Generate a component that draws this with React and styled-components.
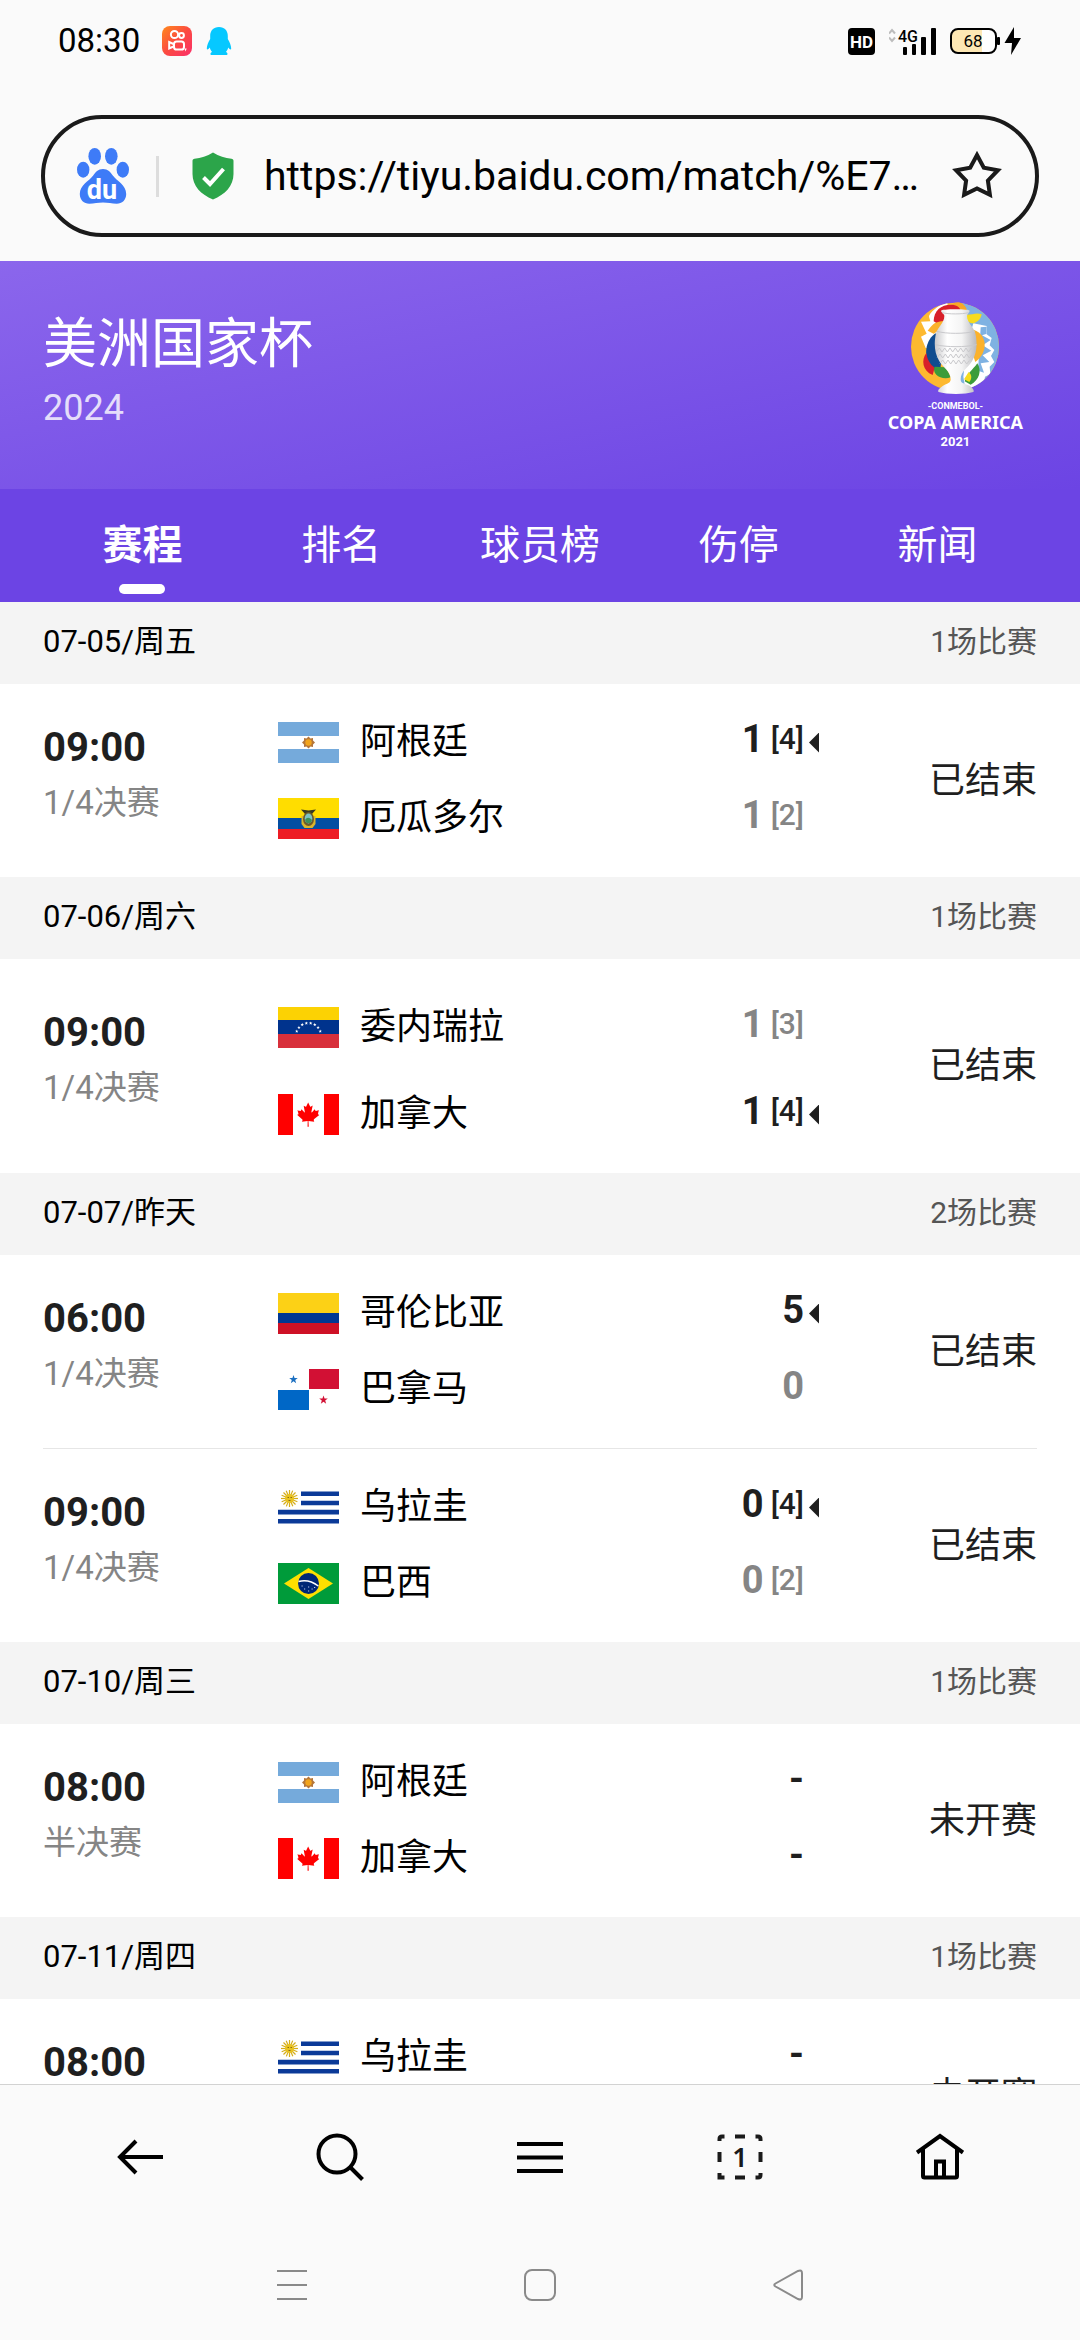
import React, { useState } from "react";
import styled, { createGlobalStyle } from "styled-components";

const GlobalStyle = createGlobalStyle`
  * {
    box-sizing: border-box;
  }

  body {
    margin: 0;
    background: #fafafa;
    color: #000000;
    font-family: "Roboto", "Noto Sans CJK SC", sans-serif;
  }

  button,
  input {
    padding: 0;
    border: none;
    background: none;
    color: inherit;
    font-family: inherit;
  }

  svg {
    display: block;
    flex-shrink: 0;
  }
`;

const Screen = styled.div`
  display: flex;
  flex-direction: column;
  height: 100vh;
  overflow: hidden;
`;

// status bar
const StatusBar = styled.div`
  display: flex;
  align-items: center;
  justify-content: space-between;
  height: 82px;
  padding: 0 58px;
  flex-shrink: 0;
`;

const StatusGroup = styled.div`
  display: flex;
  align-items: center;
`;

const Clock = styled.span`
  font-size: 33px;
  line-height: 40px;
  margin-right: 22px;
`;

const AppIcons = styled.div`
  display: flex;
  align-items: center;
  gap: 14px;
`;

// address bar
const AddressBar = styled.div`
  display: flex;
  align-items: center;
  height: 122px;
  margin: 33px 41px 24px;
  padding: 0 32px;
  border: 4px solid #1a1a1a;
  border-radius: 61px;
  flex-shrink: 0;
`;

const Separator = styled.div`
  width: 3px;
  height: 41px;
  margin: 0 33px 0 27px;
  background: #dddddd;
`;

const UrlInput = styled.input`
  flex: 1;
  min-width: 0;
  height: 60px;
  margin: 0 20px 0 30px;
  font-size: 41px;
  text-overflow: ellipsis;

  &:focus-visible {
    outline: unset;
  }
`;

const IconButton = styled.button`
  display: flex;
  align-items: center;
  justify-content: center;
  cursor: pointer;
`;

// competition header
const Banner = styled.header`
  display: flex;
  justify-content: space-between;
  height: 228px;
  padding: 41px 57px 0 43px;
  background: linear-gradient(to bottom right, #8b66ec 0%, #6c44e4 100%);
  color: #ffffff;
  flex-shrink: 0;
`;

const BannerTitle = styled.h1`
  margin: 0;
  font-weight: 400;
  font-size: 54px;
  line-height: 86px;
`;

const Season = styled.div`
  font-size: 36px;
  line-height: 40px;
  opacity: 0.8;
`;

const CupLogo = styled.div`
  display: flex;
  flex-direction: column;
  align-items: center;
  font-weight: 700;
  white-space: nowrap;
`;

const CupOrganiser = styled.span`
  margin-top: 6px;
  font-size: 9px;
  line-height: 12px;
`;

const CupName = styled.span`
  font-family: "Noto Sans", sans-serif;
  font-size: 18px;
  line-height: 20px;
`;

const CupYear = styled.span`
  font-size: 13px;
  line-height: 20px;
`;

const Tabs = styled.nav`
  display: flex;
  height: 113px;
  padding: 0 43px;
  background: #6c44e4;
  flex-shrink: 0;
`;

const Tab = styled.button`
  flex: 1;
  display: flex;
  flex-direction: column;
  align-items: center;
  padding-top: 27px;
  color: #ffffff;
  font-size: 40px;
  line-height: 60px;
  font-weight: ${(props) => (props.$active ? 700 : 400)};
  cursor: pointer;

  &::after {
    content: "";
    width: 46px;
    height: 10px;
    margin-top: 8px;
    border-radius: 5px;
    background: ${(props) => (props.$active ? "#ffffff" : "transparent")};
  }
`;

// schedule
const Schedule = styled.main`
  flex: 1;
  min-height: 0;
  overflow-y: auto;
  scrollbar-width: none;
  background: #ffffff;
`;

const DayHeader = styled.div`
  display: flex;
  align-items: center;
  justify-content: space-between;
  height: 82px;
  padding: 0 43px 2px;
  background: #f4f4f4;
  line-height: 40px;
`;

const DayTitle = styled.h2`
  margin: 0;
  font-size: 31px;
  font-weight: 400;
`;

const DayCount = styled.span`
  font-size: 30px;
  color: #555555;
`;

const MatchList = styled.ul`
  margin: 0;
  padding: 0 43px;
  list-style: none;
`;

const MatchRow = styled.li`
  display: grid;
  grid-template-columns: 235px 1fr 218px;
  align-items: center;
  padding: 38px 0;

  & + & {
    border-top: 1px solid #e6e6e6;
  }
`;

const KickOff = styled.div`
  font-weight: 700;
  font-size: 40px;
  line-height: 34px;
  color: #1f1f1f;
`;

const Stage = styled.div`
  margin-top: 10px;
  font-size: 33px;
  line-height: 56px;
  color: #858585;
`;

const Teams = styled.div`
  display: flex;
  flex-direction: column;
  gap: ${(props) => (props.$tall ? 36 : 35)}px;
`;

const TeamRow = styled.div`
  display: flex;
  align-items: center;
  height: ${(props) => (props.$tall ? 51 : 41)}px;
  padding-top: ${(props) => (props.$tall ? 10 : 0)}px;
`;

const TeamName = styled.span`
  margin-left: 21px;
  font-size: 36px;
  line-height: 41px;
`;

const Score = styled.span`
  display: flex;
  align-self: flex-start;
  gap: 7px;
  margin-left: auto;
  font-weight: 700;
  font-size: 38px;
  line-height: 34px;
  color: ${(props) => (props.$muted ? "#858585" : "#1f1f1f")};
`;

const Penalties = styled.span`
  font-weight: 500;
  font-size: 30px;
`;

const WinnerMark = styled.span`
  width: 10px;
  height: 20px;
  margin-left: 5px;
  background: ${(props) => (props.$winner ? "#1f1f1f" : "transparent")};
  clip-path: polygon(100% 0, 100% 100%, 0 50%);
`;

const MatchStatus = styled.div`
  text-align: right;
  font-size: 36px;
  line-height: 52px;
  color: #1f1f1f;
`;

// bottom bars
const Toolbar = styled.nav`
  display: grid;
  grid-template-columns: repeat(5, 1fr);
  height: 145px;
  padding: 0 40px;
  border-top: 1px solid #d2d2d2;
  background: #fafafa;
  flex-shrink: 0;
`;

const SystemNav = styled.nav`
  display: grid;
  grid-template-columns: repeat(3, 248px);
  justify-content: center;
  height: 111px;
  background: #fafafa;
  flex-shrink: 0;
`;

const KuaishouIcon = () => (
  <svg width="30" height="30" viewBox="0 0 30 30">
    <defs>
      <linearGradient id="ks" x1="0" y1="0" x2="1" y2="1">
        <stop offset="0" stopColor="#ff8a1c" />
        <stop offset="0.5" stopColor="#fb4a41" />
        <stop offset="1" stopColor="#fb2f6a" />
      </linearGradient>
    </defs>
    <rect width="30" height="30" rx="8" fill="url(#ks)" />
    <g fill="none" stroke="#ffffff" strokeWidth="2">
      <circle cx="12.500" cy="8.500" r="3.600" />
      <circle cx="19.500" cy="9.500" r="2.400" />
      <rect x="12" y="15.500" width="10" height="8" rx="2.600" />
      <path d="M11.500 18 7.200 16v6.500l4.300-2" />
    </g>
    <path d="M22.500 22.500h2.200l-1.200 3z" fill="#ffffff" />
  </svg>
);

const QQIcon = () => (
  <svg width="26" height="30" viewBox="0 0 26 30">
    <path
      d="M13 1c5.600 0 8.800 3.800 8.800 9v3c1.800 3 3.400 6.500 3.400 9.500 0 1.700-1.600 1-3-1-.5 2-1.200 3.300-2.300 4.500 2 .8 2.200 3 .4 3H5.700c-1.800 0-1.600-2.200.4-3-1.100-1.200-1.800-2.500-2.300-4.500-1.400 2-3 2.700-3 1 0-3 1.600-6.500 3.400-9.500v-3c0-5.200 3.200-9 8.800-9z"
      fill="#06c8ff"
    />
  </svg>
);

const HdIcon = () => (
  <svg width="27" height="27" viewBox="0 0 27 27">
    <rect width="27" height="27" rx="4" fill="#000000" />
    <text
      x="13.500"
      y="20"
      textAnchor="middle"
      fontFamily="Roboto"
      fontWeight="700"
      fontSize="17"
      fill="#ffffff"
    >
      HD
    </text>
  </svg>
);

const SignalIcon = () => (
  <svg width="47" height="27" viewBox="1 0 47 27">
    <path
      d="M1 5.500 4 2l3 3.500M1 9.500 4 13l3-3.500"
      fill="none"
      stroke="#bcbcbc"
      strokeWidth="2"
    />
    <text x="10" y="13.500" fontFamily="Roboto" fontWeight="500" fontSize="16">
      4G
    </text>
    <rect x="15" y="19" width="4" height="8" rx="1" />
    <rect x="24" y="16" width="4" height="11" rx="1" />
    <rect x="33" y="9" width="5" height="18" rx="1" />
    <rect x="43" y="0" width="5" height="27" rx="1" />
  </svg>
);

const BatteryIcon = () => (
  <svg width="72" height="28" viewBox="0 0 72 28">
    <rect x="1" y="2" width="45" height="24" rx="7" fill="#ffffff" />
    <path d="M8 2h24v24H8a7 7 0 0 1-7-7V9a7 7 0 0 1 7-7z" fill="#fde7b3" />
    <rect
      x="1"
      y="2"
      width="45"
      height="24"
      rx="7"
      fill="none"
      stroke="#000000"
      strokeWidth="2"
    />
    <rect x="47" y="10" width="3" height="8" rx="1" />
    <text x="23" y="20" textAnchor="middle" fontFamily="Roboto" fontSize="17">
      68
    </text>
    <path d="M64 0 54.500 16H62l-1 12L71 11h-7z" />
  </svg>
);

const BaiduIcon = () => (
  <svg width="52" height="58" viewBox="77 147 52 58">
    <g fill="#3e7bf7">
      <ellipse cx="94.700" cy="156.300" rx="6.300" ry="8.400" />
      <ellipse cx="111.300" cy="156.300" rx="6.300" ry="8.400" />
      <ellipse cx="83.200" cy="169.700" rx="6.200" ry="8" />
      <ellipse cx="122.800" cy="169.700" rx="6.200" ry="8" />
      <path d="M103 169c5 0 7.500 3 10 6.800 3.500 5 13.200 9.200 13.200 18.200 0 6-4.200 9.800-9.500 9.800-5 0-8.500-1.200-13.700-1.200s-8.700 1.200-13.700 1.200c-5.300 0-9.500-3.800-9.500-9.800 0-9 9.700-13.200 13.200-18.200 2.500-3.800 5-6.800 10-6.800z" />
    </g>
    <text
      x="102"
      y="198.500"
      textAnchor="middle"
      fontFamily="Roboto"
      fontWeight="700"
      fontSize="27"
      fill="#ffffff"
    >
      du
    </text>
  </svg>
);

const ShieldIcon = () => (
  <svg width="42" height="48" viewBox="0 0 42 48">
    <path
      d="M21 .5c6 3.500 12 5.800 18.500 6.200 1.200.1 2 .9 2 2.300v13c0 12-8.500 20.500-20.500 25.500C9 42.500.5 34 .5 22V9c0-1.400.8-2.200 2-2.300C9 6.300 15 4 21 .5z"
      fill="#2ca54a"
    />
    <path
      d="m11.500 25.500 6.500 6.500 13.500-15"
      fill="none"
      stroke="#ffffff"
      strokeWidth="4"
    />
  </svg>
);

const StarIcon = () => (
  <svg width="52" height="52" viewBox="0 0 52 52">
    <path
      d="M26 5 32.800 17.700 46.900 20.200 36.900 30.600 38.900 44.800 26 38.500 13.100 44.800 15.100 30.600 5.100 20.200 19.200 17.700z"
      fill="none"
      stroke="#1a1a1a"
      strokeWidth="4"
    />
  </svg>
);

const CupIcon = () => (
  <svg width="88" height="92" viewBox="153 66 264 276">
    <defs>
      <linearGradient id="cup" x1="0" x2="1">
        <stop offset="0" stopColor="#c9c9cb" />
        <stop offset="0.3" stopColor="#ffffff" />
        <stop offset="0.65" stopColor="#f4f4f4" />
        <stop offset="1" stopColor="#b9b9bd" />
      </linearGradient>
      <clipPath id="disc">
        <circle cx="285" cy="200" r="132" />
      </clipPath>
    </defs>
    <g clipPath="url(#disc)">
      <rect x="153" y="66" width="264" height="276" fill="#fdb930" />
      <path d="M292 60h130v290h-90l-40-60z" fill="#7fb2e2" />
      <path
        d="M262 66c-30 10-55 35-55 44l4 14-28 1 17 36-17 9 14 34 50 6 20-80z"
        fill="#ffffff"
      />
      <path
        d="m340 130 40 8-1 24 16 12-6 22 14 14-10 18 10 18-14 14 2 22-16 8-4 22-20 18-31 20-10-60 10-90z"
        fill="#ffffff"
      />
      <path
        d="m362 142 18-2-2 22-12 4 26 14-24 16 26 16-26 14 20 20-26 4 10 28-18-6z"
        fill="#7fb2e2"
      />
    </g>
    <path d="M278 74c8-12 34-10 42 14l2 12h-26z" fill="#f9a825" />
    <path d="M221 124c0-32 22-50 52-50 16 0 28 8 30 20l-56 46z" fill="#d8202a" />
    <path d="M203 152c12-14 18-27 46-29l2 26c-18 0-24 10-30 12z" fill="#fbb22c" />
    <path d="M318 104c16 2 30-8 47-1-2 12-10 22-22 26-10 2-18-2-22-8z" fill="#f7dc1e" />
    <path d="M228 160c-24 12-38 52-24 86 8 18 20 26 36 28l8-60z" fill="#0f4c8f" />
    <path d="M199 219c-16 20-12 54 19 66l6-22c-14-10-22-24-25-44z" fill="#d8202a" />
    <path d="M224 260c-10 22 20 42 48 32l-14-30z" fill="#3c9c3a" />
    <path d="M342 150c40 14 44 66 4 96l-10-30z" fill="#fbb22c" />
    <path d="M352 250c14 22 6 50-20 64l-18-10c6-22 24-34 38-54z" fill="#3c9c3a" />
    <path d="M326 276c10 8 10 20 2 30l-16-8z" fill="#f7dc1e" />
    <path
      d="M243 92c0-6 86-6 86 0s-8 9-8 16c0 20 20 32 25 52 6 26 6 58-10 84-12 20-34 30-34 54 0 14 12 12 28 20 8 6 14 14 10 18-24 8-80 8-104 0-6-4 4-12 12-18 14-8 24-8 24-20 0-24-22-34-34-54-16-26-16-58-10-84 6-20 25-32 25-52 0-7-10-10-10-16z"
      fill="url(#cup)"
    />
    <g fill="none" stroke="#c9c9cc" strokeWidth="3">
      <path d="M246 98c20 5 60 5 80 0M230 154c30 8 84 8 114 0M226 194c34 8 90 8 124 0" />
      <path d="m230 214 8-10 8 12 8-12 8 12 8-12 8 12 8-12 8 12 8-12 8 12 8-12 8 12 8-12 6 10M232 232l8-10 8 12 8-12 8 12 8-12 8 12 8-12 8 12 8-12 8 12 8-12 8 12 8-10M240 250l8-10 8 12 8-12 8 12 8-12 8 12 8-12 8 12 8-12 8 12 8-10" />
    </g>
  </svg>
);

const starPoints = (cx, cy, r) =>
  Array.from({ length: 10 }, (_, i) => {
    const radius = i % 2 ? r * 0.4 : r;
    const angle = (Math.PI / 5) * i;
    return `${cx + radius * Math.sin(angle)},${cy - radius * Math.cos(angle)}`;
  }).join(" ");

const flags = {
  argentina: (
    <>
      <rect width="61" height="41" fill="#ffffff" />
      <rect width="61" height="14" fill="#75aadb" />
      <rect y="27" width="61" height="14" fill="#75aadb" />
      <polygon
        points="30.500,14.500 32.500,16.500 35,16 35,18.500 37,20.500 35,22.500 35,25 32.500,24.500 30.500,26.500 28.500,24.500 26,25 26,22.500 24,20.500 26,18.500 26,16 28.500,16.500"
        fill="#b5763a"
      />
      <circle cx="30.500" cy="20.500" r="3.200" fill="#f2a51d" />
    </>
  ),
  ecuador: (
    <>
      <rect width="61" height="21" fill="#ffdd00" />
      <rect y="20" width="61" height="11" fill="#034ea2" />
      <rect y="31" width="61" height="10" fill="#ed1c24" />
      <path d="M23.500 18h14v8l-3 4h-8l-3-4z" fill="#d9b52c" />
      <path
        d="M23 11.500c3 0 5 1 7.500 1s4.500-1 7.500-1l-4 4.500h-7z"
        fill="#3a3a20"
      />
      <ellipse cx="30.500" cy="21" rx="5.500" ry="7" fill="#6b5b2c" />
      <ellipse cx="30.500" cy="20.500" rx="3.800" ry="5" fill="#7cc2c4" />
      <path d="M27 22c2-3 4-3 7 0l-1.500 3h-4z" fill="#3f8f55" />
    </>
  ),
  venezuela: (
    <>
      <rect width="61" height="14" fill="#fcd203" />
      <rect y="13" width="61" height="14" fill="#00338d" />
      <rect y="27" width="61" height="14" fill="#d8303b" />
      {[-70, -50, -30, -10, 10, 30, 50, 70].map((deg) => {
        const a = (deg * Math.PI) / 180;
        return (
          <polygon
            key={deg}
            points={starPoints(
              30.5 + 12.5 * Math.sin(a),
              28.5 - 12.5 * Math.cos(a),
              1.8
            )}
            fill="#ffffff"
          />
        );
      })}
    </>
  ),
  canada: (
    <>
      <rect width="61" height="41" fill="#ffffff" />
      <rect width="15" height="41" fill="#ff0000" />
      <rect x="46" width="15" height="41" fill="#ff0000" />
      <path
        transform="translate(2.700 .3) scale(.087)"
        d="m201 232-13.300 4.400 61.400 54c4.700 13.700-1.600 17.800-5.600 25l66.600-8.400-1.600 67 13.900-.3-3.100-66.600 66.700 8c-4.100-8.700-7.800-13.300-4-27.200l61.300-51-10.700-4c-8.800-6.800 3.800-32.600 5.600-48.900 0 0-35.700 12.300-38 5.800l-9.200-17.500-32.600 35.800c-3.500.9-5-.5-5.900-3.500l15-74.800-23.800 13.400q-3.200 1.300-5.200-2.200l-23-46-23.600 47.800q-2.800 2.500-5 .7L264 130.800l13.700 74.100c-1.100 3-3.700 3.800-6.700 2.200l-31.200-35.300c-4 6.500-6.800 17.100-12.200 19.500s-23.500-4.500-35.600-7c4.200 14.800 17 39.600 9 47.700"
        fill="#ff0000"
      />
    </>
  ),
  colombia: (
    <>
      <rect width="61" height="21" fill="#fcd116" />
      <rect y="20" width="61" height="11" fill="#003893" />
      <rect y="30" width="61" height="11" fill="#ce1126" />
    </>
  ),
  panama: (
    <>
      <rect width="61" height="41" fill="#ffffff" />
      <rect x="31" width="30" height="20" fill="#d21034" />
      <rect y="21" width="31" height="20" fill="#0067c6" />
      <polygon points={starPoints(15.5, 10.5, 4.5)} fill="#1b6fc0" />
      <polygon points={starPoints(45.5, 31, 4.5)} fill="#d21034" />
    </>
  ),
  uruguay: (
    <>
      <rect width="61" height="41" fill="#ffffff" />
      <path
        d="M23 4.500h38v4.600H23zM23 13.700h38v4.600H23zM0 22.800h61v4.600H0zM0 32h61v4.600H0z"
        fill="#0b3a98"
      />
      <g stroke="#d4ac1c" strokeWidth="1.200">
        {[0, 22, 45, 67, 90, 112, 135, 157].map((deg) => (
          <line
            key={deg}
            x1="3"
            y1="11.500"
            x2="20"
            y2="11.500"
            transform={`rotate(${deg} 11.500 11.500)`}
          />
        ))}
      </g>
      <circle cx="11.500" cy="11.500" r="4.600" fill="#e8c220" />
      <path d="M9.500 10.500h1.500M12.500 10.500h1.500M10.500 13.500h2" stroke="#8a6d12" />
    </>
  ),
  brazil: (
    <>
      <rect width="61" height="41" fill="#009b3a" />
      <path d="M6 20.500 30.500 5 55 20.500 30.500 36z" fill="#fedf00" />
      <circle cx="30.500" cy="20.500" r="10.500" fill="#002776" />
      <path
        d="M20.500 18.500c7-2 14 0 19.800 4.500"
        fill="none"
        stroke="#ffffff"
        strokeWidth="1.500"
      />
      <path
        d="M23.500 23h1.200M26 26h1.200M30 24h1.200M30 28h1.200M33.500 26h1.200M36 24.500h1.200"
        stroke="#b8c6e6"
      />
    </>
  ),
};

const Flag = ({ code }) => (
  <svg width="61" height="41" viewBox="0 0 61 41">
    {flags[code]}
  </svg>
);

const stroke = {
  fill: "none",
  stroke: "#000000",
  strokeWidth: 4,
};

const BackIcon = () => (
  <svg width="48" height="48" viewBox="0 0 48 48">
    <path d="M47 24H4M20 8 4 24l16 16" {...stroke} />
  </svg>
);

const SearchIcon = () => (
  <svg width="48" height="48" viewBox="0 0 48 48">
    <circle cx="21" cy="21" r="18.500" {...stroke} />
    <path d="m34 34 12.500 12.500" {...stroke} />
  </svg>
);

const MenuIcon = () => (
  <svg width="48" height="48" viewBox="0 0 48 48">
    <path d="M1 11h46M1 24.500h46M1 38h46" {...stroke} />
  </svg>
);

const WindowsIcon = () => (
  <svg width="48" height="48" viewBox="0 0 48 48">
    <path
      d="M3.500 8V6q0-2.500 2.500-2.500h2.500M39.500 3.500H42q2.500 0 2.500 2.500v2M44.500 40v2q0 2.500-2.500 2.500h-2.500M8.500 44.500h-5V40M19 3.500h10M19 44.500h10M3.500 19v10M44.500 19v10"
      fill="none"
      stroke="#1a1a1a"
      strokeWidth="4"
    />
    <text
      x="24"
      y="33.500"
      textAnchor="middle"
      fontFamily="Noto Sans"
      fontWeight="600"
      fontSize="27"
      fill="#1a1a1a"
    >
      1
    </text>
  </svg>
);

const HomeIcon = () => (
  <svg width="48" height="48" viewBox="0 0 48 48">
    <path d="M1 19.500 24 3l23 16.500" {...stroke} />
    <path d="M7 16v27q0 1.500 1.500 1.500h31q1.500 0 1.500-1.500V16" {...stroke} />
    <path d="M20 44V28.500h8V44" {...stroke} />
  </svg>
);

const RecentsIcon = () => (
  <svg width="32" height="32" viewBox="0 0 32 32">
    <path d="M1 2h30M1 16h30M1 30h30" fill="none" stroke="#8a8a8a" strokeWidth="2" />
  </svg>
);

const SquareIcon = () => (
  <svg width="32" height="32" viewBox="0 0 32 32">
    <rect
      x="1"
      y="1"
      width="30"
      height="30"
      rx="7"
      fill="none"
      stroke="#8a8a8a"
      strokeWidth="2"
    />
  </svg>
);

const TriangleIcon = () => (
  <svg width="32" height="32" viewBox="0 0 32 32">
    <path
      d="M3.500 14.500 26 2q4-1.500 4 2v24q0 3.500-4 2L3.500 17.500q-2.500-1.500 0-3z"
      fill="none"
      stroke="#8a8a8a"
      strokeWidth="2"
    />
  </svg>
);

const tabs = ["赛程", "排名", "球员榜", "伤停", "新闻"];

const days = [
  {
    date: "07-05/周五",
    matches: [
      {
        time: "09:00",
        stage: "1/4决赛",
        status: "已结束",
        teams: [
          { flag: "argentina", name: "阿根廷", score: "1", penalties: "[4]", winner: true },
          { flag: "ecuador", name: "厄瓜多尔", score: "1", penalties: "[2]", loser: true },
        ],
      },
    ],
  },
  {
    date: "07-06/周六",
    matches: [
      {
        time: "09:00",
        stage: "1/4决赛",
        status: "已结束",
        tall: true,
        teams: [
          { flag: "venezuela", name: "委内瑞拉", score: "1", penalties: "[3]", loser: true },
          { flag: "canada", name: "加拿大", score: "1", penalties: "[4]", winner: true },
        ],
      },
    ],
  },
  {
    date: "07-07/昨天",
    matches: [
      {
        time: "06:00",
        stage: "1/4决赛",
        status: "已结束",
        teams: [
          { flag: "colombia", name: "哥伦比亚", score: "5", winner: true },
          { flag: "panama", name: "巴拿马", score: "0", loser: true },
        ],
      },
      {
        time: "09:00",
        stage: "1/4决赛",
        status: "已结束",
        teams: [
          { flag: "uruguay", name: "乌拉圭", score: "0", penalties: "[4]", winner: true },
          { flag: "brazil", name: "巴西", score: "0", penalties: "[2]", loser: true },
        ],
      },
    ],
  },
  {
    date: "07-10/周三",
    matches: [
      {
        time: "08:00",
        stage: "半决赛",
        status: "未开赛",
        teams: [
          { flag: "argentina", name: "阿根廷", score: "-" },
          { flag: "canada", name: "加拿大", score: "-" },
        ],
      },
    ],
  },
  {
    date: "07-11/周四",
    matches: [
      {
        time: "08:00",
        stage: "半决赛",
        status: "未开赛",
        teams: [
          { flag: "uruguay", name: "乌拉圭", score: "-" },
          { flag: "colombia", name: "哥伦比亚", score: "-" },
        ],
      },
    ],
  },
];

function Match({ match }) {
  return (
    <MatchRow>
      <div>
        <KickOff>{match.time}</KickOff>
        <Stage>{match.stage}</Stage>
      </div>
      <Teams $tall={match.tall}>
        {match.teams.map((team) => (
          <TeamRow key={team.name} $tall={match.tall}>
            <Flag code={team.flag} />
            <TeamName>{team.name}</TeamName>
            <Score $muted={team.loser}>
              {team.score}
              {team.penalties && <Penalties>{team.penalties}</Penalties>}
            </Score>
            <WinnerMark $winner={team.winner} />
          </TeamRow>
        ))}
      </Teams>
      <MatchStatus>{match.status}</MatchStatus>
    </MatchRow>
  );
}

function App() {
  const [activeTab, setActiveTab] = useState("赛程");

  return (
    <>
      <GlobalStyle />
      <Screen>
        <StatusBar>
          <StatusGroup>
            <Clock>08:30</Clock>
            <AppIcons>
              <KuaishouIcon />
              <QQIcon />
            </AppIcons>
          </StatusGroup>
          <AppIcons>
            <HdIcon />
            <SignalIcon />
            <BatteryIcon />
          </AppIcons>
        </StatusBar>
        <AddressBar>
          <BaiduIcon />
          <Separator />
          <ShieldIcon />
          <UrlInput
            type="text"
            aria-label="网址"
            readOnly
            value="https://tiyu.baidu.com/match/%E7…"
          />
          <IconButton aria-label="收藏">
            <StarIcon />
          </IconButton>
        </AddressBar>
        <Banner>
          <div>
            <BannerTitle>美洲国家杯</BannerTitle>
            <Season>2024</Season>
          </div>
          <CupLogo>
            <CupIcon />
            <CupOrganiser>-CONMEBOL-</CupOrganiser>
            <CupName>COPA AMERICA</CupName>
            <CupYear>2021</CupYear>
          </CupLogo>
        </Banner>
        <Tabs>
          {tabs.map((tab) => (
            <Tab
              key={tab}
              $active={tab === activeTab}
              onClick={() => setActiveTab(tab)}
            >
              {tab}
            </Tab>
          ))}
        </Tabs>
        <Schedule>
          {days.map((day) => (
            <section key={day.date}>
              <DayHeader>
                <DayTitle>{day.date}</DayTitle>
                <DayCount>{day.matches.length}场比赛</DayCount>
              </DayHeader>
              <MatchList>
                {day.matches.map((match) => (
                  <Match key={match.teams[0].name} match={match} />
                ))}
              </MatchList>
            </section>
          ))}
        </Schedule>
        <Toolbar>
          <IconButton aria-label="后退">
            <BackIcon />
          </IconButton>
          <IconButton aria-label="搜索">
            <SearchIcon />
          </IconButton>
          <IconButton aria-label="菜单">
            <MenuIcon />
          </IconButton>
          <IconButton aria-label="窗口">
            <WindowsIcon />
          </IconButton>
          <IconButton aria-label="主页">
            <HomeIcon />
          </IconButton>
        </Toolbar>
        <SystemNav>
          <IconButton aria-label="最近任务">
            <RecentsIcon />
          </IconButton>
          <IconButton aria-label="桌面">
            <SquareIcon />
          </IconButton>
          <IconButton aria-label="返回">
            <TriangleIcon />
          </IconButton>
        </SystemNav>
      </Screen>
    </>
  );
}

export default App;
